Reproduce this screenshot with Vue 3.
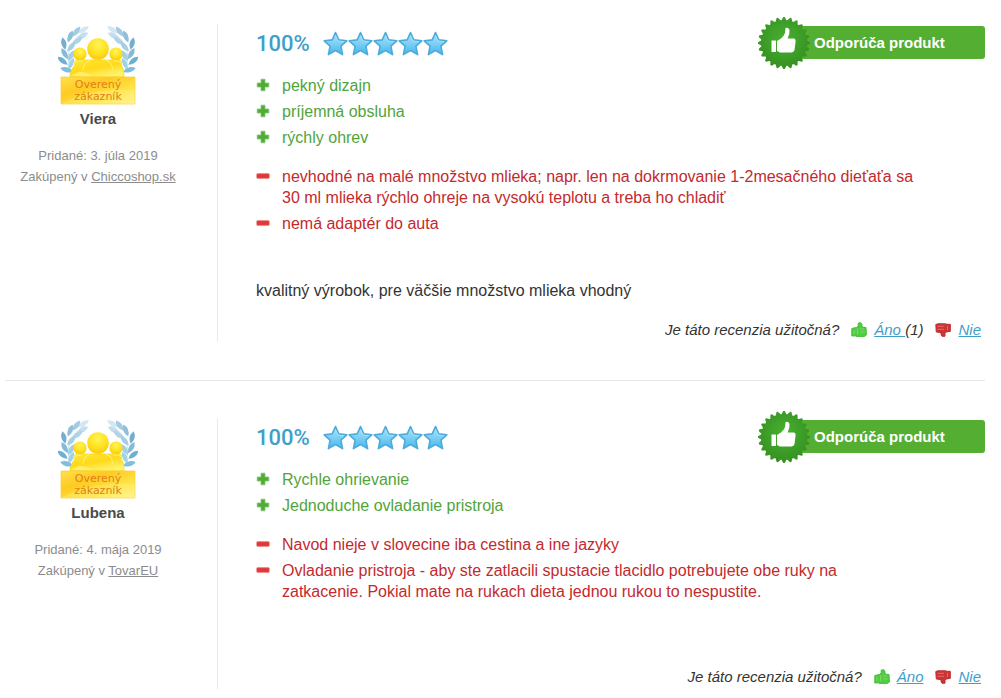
<script setup>
const reviews = [
  {
    name: 'Viera',
    date: '3. júla 2019',
    shop: 'Chiccoshop.sk',
    rating: '100%',
    pros: ['pekný dizajn', 'príjemná obsluha', 'rýchly ohrev'],
    cons: [
      'nevhodné na malé množstvo mlieka; napr. len na dokrmovanie 1-2mesačného dieťaťa sa 30 ml mlieka rýchlo ohreje na vysokú teplotu a treba ho chladiť',
      'nemá adaptér do auta'
    ],
    comment: 'kvalitný výrobok, pre väčšie množstvo mlieka vhodný',
    yes: 1
  },
  {
    name: 'Lubena',
    date: '4. mája 2019',
    shop: 'TovarEU',
    rating: '100%',
    pros: ['Rychle ohrievanie', 'Jednoduche ovladanie pristroja'],
    cons: [
      'Navod nieje v slovecine iba cestina a ine jazyky',
      'Ovladanie pristroja - aby ste zatlacili spustacie tlacidlo potrebujete obe ruky na zatkacenie. Pokial mate na rukach dieta jednou rukou to nespustite.'
    ],
    comment: '',
    yes: 0
  }
]

// Toothed rim of the recommendation seal
const teeth = 24
const seal = Array.from({ length: teeth * 4 }, (_, i) => {
  const step = i % 4
  const r = step < 2 ? 26 : 23
  const shift = [-0.1, 0.1, 0.42, 0.58][step]
  const a = ((Math.floor(i / 4) + shift) / teeth) * Math.PI * 2
  return `${(27 + r * Math.sin(a)).toFixed(2)},${(27 - r * Math.cos(a)).toFixed(2)}`
}).join(' ')

// Laurel leaves: x, y, rotation, colour
const leaves = [
  [25, 6, 58, '#d3e7f2'], [18, 8, 38, '#a3cbe1'], [24, 12, 62, '#c3deec'],
  [12, 13, 22, '#8fbfda'], [19, 17, 55, '#b0d4e6'], [6, 20, -14, '#74adce'],
  [13, 23, 40, '#a5cfe2'], [7, 30, -30, '#86bad6'], [13, 32, 30, '#a2d0e3'],
  [5, 37, -52, '#6cb0d2'], [13, 40, 25, '#a0d2e5'], [9, 46, -74, '#7dbfdc']
]
</script>

<template>
  <main class="reviews">
    <svg class="defs" width="0" height="0" aria-hidden="true">
      <defs>
        <linearGradient id="gold" x1="0" y1="0" x2="0.6" y2="1">
          <stop offset="0" stop-color="#ffe92e" /><stop offset="0.55" stop-color="#ffd91c" /><stop offset="1" stop-color="#fff36a" />
        </linearGradient>
        <radialGradient id="head" cx="0.5" cy="0.3" r="0.7">
          <stop offset="0" stop-color="#fff45c" /><stop offset="0.55" stop-color="#ffe321" /><stop offset="1" stop-color="#f8ca10" />
        </radialGradient>
        <linearGradient id="plate" x1="0" y1="0" x2="1" y2="1">
          <stop offset="0" stop-color="#ffe04c" /><stop offset="0.35" stop-color="#ffca22" /><stop offset="0.7" stop-color="#ffe54a" /><stop offset="1" stop-color="#fff7a8" />
        </linearGradient>
        <linearGradient id="star" x1="0" y1="0" x2="0" y2="1">
          <stop offset="0" stop-color="#a8e2fa" /><stop offset="0.5" stop-color="#7dd0f5" /><stop offset="1" stop-color="#41b7ec" />
        </linearGradient>
        <radialGradient id="sealfill" cx="0.5" cy="0.42" r="0.55">
          <stop offset="0" stop-color="#4caf30" /><stop offset="0.55" stop-color="#3da029" /><stop offset="1" stop-color="#37911f" />
        </radialGradient>
      </defs>
    </svg>

    <article v-for="r in reviews" :key="r.name" class="review">
      <aside class="author">
        <svg class="emblem" viewBox="0 0 80 84" role="img" aria-label="Overený zákazník">
          <g v-for="side in 2" :key="side" :transform="side === 2 ? 'translate(80 0) scale(-1 1)' : undefined">
            <path d="M27 8Q4 20 13 47" fill="none" stroke="#c9e1ed" stroke-width="1" />
            <path v-for="(l, i) in leaves" :key="i" d="M0 -7Q5 -1 0 6Q-5 -1 0 -7Z" :fill="l[3]" :transform="`translate(${l[0]} ${l[1]}) rotate(${l[2]})`" />
          </g>
          <path d="M12 53V50Q14 44 17 41Q15 37 19 36H61Q65 37 63 41Q66 44 66 50V53Z" fill="url(#gold)" stroke="#f5cf28" stroke-width=".7" />
          <circle cx="22" cy="30" r="6.6" fill="url(#head)" />
          <circle cx="58" cy="30" r="6.6" fill="url(#head)" />
          <path d="M15 40Q18 36 25 37M65 40Q62 36 55 37" fill="none" stroke="#fff06a" stroke-width="1.2" />
          <path d="M25 46Q26 38 32 36M55 46Q54 38 48 36" fill="none" stroke="#fff06a" stroke-width="1.2" />
          <path d="M14 52Q22 44 34 52Z" fill="#fff487" opacity=".7" />
          <circle cx="40" cy="25" r="10.8" fill="url(#head)" />
          <path d="M3 53H77V80H3Z" fill="url(#plate)" stroke="#f8cf3b" stroke-width=".7" />
          <path d="M3 80Q35 63 77 66V80Z" fill="#fff179" opacity=".4" />
          <g class="emblem-text"><text x="40" y="64">Overený</text><text x="40" y="76">zákazník</text></g>
        </svg>
        <h2>{{ r.name }}</h2>
        <p class="meta">Pridané: {{ r.date }}<br />Zakúpený v <a href="#">{{ r.shop }}</a></p>
      </aside>

      <section class="content">
        <header>
          <strong class="percent">{{ r.rating }}</strong>
          <div class="stars">
            <svg v-for="n in 5" :key="n" viewBox="0 0 25 26" aria-hidden="true">
              <path d="M12.5 1.6L15.8 8.9L23.8 9.8L17.9 15.2L19.6 23.6L12.5 19.5L5.4 23.6L7.1 15.2L1.2 9.8L9.2 8.9Z" fill="url(#star)" stroke="#4dabdc" stroke-width="1.6" stroke-linejoin="round" />
              <path d="M12.5 4.5L14.9 10L20.8 10.7" fill="none" stroke="#b0e4fa" stroke-width=".8" />
            </svg>
          </div>
          <div class="recommend">
            <svg viewBox="0 0 54 54" aria-hidden="true">
              <polygon :points="seal" fill="url(#sealfill)" />
              <path d="M14.5 24.5H19V36H14.5ZM20 25L24 22.5Q27 20 28 17L28.5 12Q31.5 11 32.5 14Q33 18 30.5 22.5H37Q39 23 38.5 26L37.5 34Q37 36 34.5 36.5H23L20 35Z" fill="#fff" />
            </svg>
            <span>Odporúča produkt</span>
          </div>
        </header>

        <ul class="pros">
          <li v-for="p in r.pros" :key="p">
            <svg viewBox="0 0 14 14" aria-hidden="true"><path d="M5 1.2H9V5H12.8V9H9V12.8H5V9H1.2V5H5Z" fill="#4fad35" stroke="#83c672" stroke-width=".8" stroke-linejoin="round" /></svg>
            <span>{{ p }}</span>
          </li>
        </ul>
        <ul class="cons">
          <li v-for="c in r.cons" :key="c">
            <svg viewBox="0 0 14 14" aria-hidden="true"><rect x=".7" y="4.6" width="12.6" height="4.8" rx="1" fill="#e23736" stroke="#ef8585" stroke-width=".7" /></svg>
            <span>{{ c }}</span>
          </li>
        </ul>
        <p class="comment">{{ r.comment }}</p>

        <footer>
          <span>Je táto recenzia užitočná?</span>
          <span class="vote">
            <svg viewBox="0 0 16 16" aria-hidden="true"><path d="M.8 6.5L5.4 5.5L7.2 3.8V1L9.8.8L11 2.5V5L15 5.5L15.4 13L13.5 14.4H6L4 13.8L.8 14Z" fill="#52cc42" stroke="#48bc3b" /><path d="M3 8V12M6.5 6.5V12M9 7H13M9.5 10H13.5" fill="none" stroke="#79dc6a" /></svg>
            <span><a href="#">Áno<template v-if="r.yes">&nbsp;</template></a><template v-if="r.yes">({{ r.yes }})</template></span>
          </span>
          <span class="vote">
            <svg viewBox="0 0 16 16" aria-hidden="true"><path d="M.8 2.5L3 1.8H10.5L12 2.3H15.3V9.4L11 10L10 11.5V14.2L7 14.3L6 12.3V10.6L1.3 10Z" fill="#cb3535" stroke="#bb3030" /><path d="M2.5 4.3H9M2.5 7.3H9M12.5 4V8" fill="none" stroke="#e06a6a" /></svg>
            <a href="#">Nie</a>
          </span>
        </footer>
      </section>
    </article>
  </main>
</template>

<style>
body {
  margin: 0;
  background: #fff;
}
</style>

<style scoped>
.reviews {
  padding: 24px 16px 0 5px;
  font: 16px/21px "Liberation Sans", Arial, sans-serif;
  color: #333;
}
.defs {
  position: absolute;
}
.review {
  display: grid;
  grid-template-columns: 212px minmax(0, 1fr);
}
.review + .review {
  margin-top: 38px;
  padding-top: 37px;
  border-top: 1px solid #e6e6e6;
}
.author {
  padding-right: 26px;
  text-align: center;
}
.emblem {
  display: block;
  width: 80px;
  height: 84px;
  margin: 0 auto;
}
.emblem-text {
  font: 11px "DejaVu Sans", sans-serif;
  fill: #e07f18;
  text-anchor: middle;
}
h2 {
  margin: 0;
  font-size: 15px;
  line-height: 21px;
  color: #4a4a4a;
}
.meta {
  margin: 16px 0 0;
  font-size: 13px;
  color: #8c8c8c;
}
.meta a {
  color: inherit;
}
.content {
  padding: 0 0 2px 38px;
  border-left: 1px solid #ebebeb;
}
header {
  display: flex;
  align-items: center;
  height: 40px;
}
.percent {
  font: 500 22px/26px Roboto, sans-serif;
  color: #409fc9;
}
.stars {
  display: flex;
  margin-left: 13px;
}
.stars svg {
  width: 25px;
  height: 26px;
}
.recommend {
  display: flex;
  align-items: center;
  align-self: flex-start;
  box-sizing: border-box;
  width: 195px;
  height: 33px;
  margin-top: 2px;
  margin-left: auto;
  border-radius: 3px;
  background: #53ae31;
  color: #fff;
  font-size: 15px;
  font-weight: bold;
}
.recommend svg {
  flex: none;
  width: 54px;
  height: 54px;
  margin: 0 3px 0 -33px;
}
ul {
  margin: 0;
  padding: 0 66px 0 0;
  list-style: none;
}
li {
  display: flex;
  margin-bottom: 5px;
}
li svg {
  flex: none;
  width: 14px;
  height: 14px;
  margin: 3px 12px 0 0;
}
.pros {
  margin-top: 11px;
  color: #52a43a;
}
.cons {
  margin-top: 18px;
  color: #c32a2e;
}
.comment {
  margin: 46px 0 0;
}
footer {
  display: flex;
  justify-content: flex-end;
  gap: 12px;
  padding: 18px 4px 0 0;
  font-size: 15px;
  font-style: italic;
}
.vote {
  display: flex;
  gap: 7px;
}
.vote svg {
  width: 16px;
  height: 16px;
  margin-top: 3px;
}
footer a {
  color: #409fc9;
}
</style>
